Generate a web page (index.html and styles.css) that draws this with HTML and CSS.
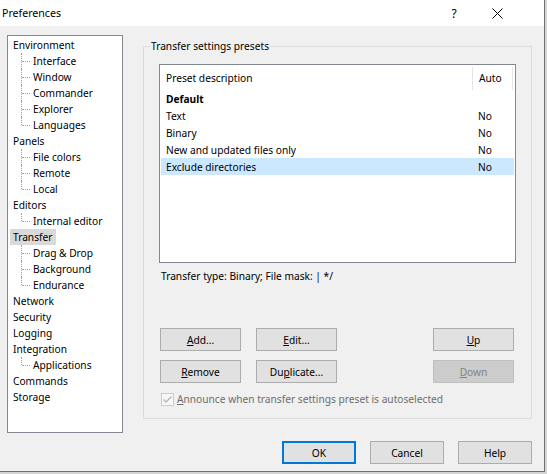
FILE: index.html
```html
<!DOCTYPE html>
<html lang="en">
<head>
    <meta charset="UTF-8">
    <title>Preferences</title>
    <link rel="stylesheet" href="styles.css">
</head>
<body>

    <div class="window">
        <!-- Title bar -->
        <div class="titlebar">
            <span class="title">Preferences</span>
            <span class="help-btn">?</span>
            <span class="close-btn">
                <svg width="11" height="11" viewBox="0 0 11 11"><path d="M0.5 0.5 L10.5 10.5 M10.5 0.5 L0.5 10.5" stroke="#000" stroke-width="1" fill="none"/></svg>
            </span>
        </div>

        <div class="client">
            <div class="main">
                <!-- Navigation tree -->
                <ul class="tree">
                    <li><span class="label">Environment</span></li>
                    <li class="child"><span class="label">Interface</span></li>
                    <li class="child"><span class="label">Window</span></li>
                    <li class="child"><span class="label">Commander</span></li>
                    <li class="child"><span class="label">Explorer</span></li>
                    <li class="child last"><span class="label">Languages</span></li>
                    <li><span class="label">Panels</span></li>
                    <li class="child"><span class="label">File colors</span></li>
                    <li class="child"><span class="label">Remote</span></li>
                    <li class="child last"><span class="label">Local</span></li>
                    <li><span class="label">Editors</span></li>
                    <li class="child last"><span class="label">Internal editor</span></li>
                    <li class="selected"><span class="label">Transfer</span></li>
                    <li class="child"><span class="label">Drag &amp; Drop</span></li>
                    <li class="child"><span class="label">Background</span></li>
                    <li class="child last"><span class="label">Endurance</span></li>
                    <li><span class="label">Network</span></li>
                    <li><span class="label">Security</span></li>
                    <li><span class="label">Logging</span></li>
                    <li><span class="label">Integration</span></li>
                    <li class="child last"><span class="label">Applications</span></li>
                    <li><span class="label">Commands</span></li>
                    <li><span class="label">Storage</span></li>
                </ul>

                <!-- Transfer page -->
                <fieldset class="group">
                    <legend>Transfer settings presets</legend>

                    <div class="listview">
                        <div class="lv-header">
                            <span class="col-desc">Preset description</span>
                            <span class="col-auto">Auto</span>
                        </div>
                        <div class="lv-row bold"><span class="col-desc">Default</span><span class="col-auto"></span></div>
                        <div class="lv-row"><span class="col-desc">Text</span><span class="col-auto">No</span></div>
                        <div class="lv-row"><span class="col-desc">Binary</span><span class="col-auto">No</span></div>
                        <div class="lv-row"><span class="col-desc">New and updated files only</span><span class="col-auto">No</span></div>
                        <div class="lv-row selected"><span class="col-desc">Exclude directories</span><span class="col-auto">No</span></div>
                    </div>

                    <div class="info">Transfer type: Binary; File mask: | */</div>

                    <div class="preset-buttons">
                        <button><u>A</u>dd...</button>
                        <button><u>E</u>dit...</button>
                        <button class="col-right"><u>U</u>p</button>
                        <button><u>R</u>emove</button>
                        <button>Du<u>p</u>licate...</button>
                        <button class="col-right" disabled><u>D</u>own</button>
                    </div>

                    <div class="check disabled">
                        <span class="checkbox">
                            <svg width="11" height="11" viewBox="0 0 11 11"><path d="M1.5 5.5 L4 8 L9.5 2.5" stroke="#b5b5b5" stroke-width="1.3" fill="none"/></svg>
                        </span>
                        <span><u>A</u>nnounce when transfer settings preset is autoselected</span>
                    </div>
                </fieldset>
            </div>

            <!-- Dialog buttons -->
            <div class="footer">
                <button class="default">OK</button>
                <button>Cancel</button>
                <button>Help</button>
            </div>
        </div>
    </div>

</body>
</html>
```

FILE: styles.css
```css
body {
    margin: 0;
    padding: 0;
    background-color: #d4d4d4;
    font-family: "Noto Sans", "Segoe UI", sans-serif;
    font-size: 10.2px;
    color: #000;
}
.window {
    width: 544px;
    height: 471px;
    border-right: 1px solid #707070;
    border-bottom: 1px solid #707070;
    background-color: #f0f0f0;
    display: flex;
    flex-direction: column;
}
.titlebar {
    flex: none;
    height: 26px;
    background-color: #fff;
    display: flex;
    align-items: center;
}
.title {
    padding-left: 2px;
    font-size: 10.6px;
}
.help-btn {
    margin-left: auto;
    width: 40px;
    text-align: center;
    font-size: 12px;
}
.close-btn {
    width: 46px;
    margin-right: 24px;
    display: flex;
    justify-content: center;
    padding-top: 1px;
}

.client {
    flex: 1;
    display: flex;
    flex-direction: column;
    padding: 9px 12px 0 7px;
}
.main {
    display: flex;
    gap: 20px;
    height: 398px;
}

/* tree */
.tree {
    width: 116px;
    height: 398px;
    box-sizing: border-box;
    margin: 0;
    padding: 1px 2px;
    list-style: none;
    background-color: #fff;
    border: 1px solid #828790;
}
.tree li {
    position: relative;
    height: 16px;
    line-height: 16px;
    white-space: nowrap;
}
.tree .label {
    display: inline-block;
    padding: 0 3px;
}
.tree .selected .label {
    background-color: #d9d9d9;
}
.tree .child {
    padding-left: 20px;
}
.tree .child::before {
    content: "";
    position: absolute;
    left: 11px;
    top: 0;
    bottom: 0;
    border-left: 1px dotted #a0a0a0;
}
.tree .child.last::before {
    bottom: 8px;
}
.tree .child::after {
    content: "";
    position: absolute;
    left: 12px;
    top: 8px;
    width: 8px;
    border-top: 1px dotted #a0a0a0;
}

/* group box */
.group {
    width: 389px;
    box-sizing: border-box;
    margin: 4px 0 0 0;
    padding: 11px 15px 12px 15px;
    border: 1px solid #dcdcdc;
    min-width: 0;
    align-self: flex-start;
}
.group legend {
    padding: 0 1px;
    margin-left: -9px;
    line-height: 14px;
}

.listview {
    height: 199px;
    box-sizing: border-box;
    border: 1px solid #828790;
    background-color: #fff;
}
.lv-header {
    display: flex;
    height: 25px;
}
.lv-header span {
    box-sizing: border-box;
    margin-top: 2px;
    height: 23px;
    line-height: 23px;
    padding-left: 6px;
    border-right: 1px solid #e5e5e5;
}
.lv-header .col-desc {
    width: 313px;
}
.lv-header .col-auto {
    width: 40px;
}
.lv-row {
    display: flex;
    box-sizing: border-box;
    height: 17px;
    padding-top: 1px;
    line-height: 16px;
    margin: 0 1px;
}
.lv-row .col-desc {
    width: 311px;
    padding-left: 5px;
    box-sizing: border-box;
}
.lv-row .col-auto {
    padding-left: 6px;
}
.lv-row.bold {
    font-weight: bold;
}
.lv-row.selected {
    background-color: #cce8ff;
}

.info {
    margin-top: 6px;
    margin-left: 2px;
    line-height: 14px;
}

.preset-buttons {
    display: grid;
    grid-template-columns: 81px 81px 1fr 81px;
    column-gap: 15px;
    row-gap: 9px;
    margin-top: 45px;
    padding: 0 2px 0 1px;
}
.preset-buttons .col-right {
    grid-column: 4;
}

button {
    height: 23px;
    padding: 1px 0 0 0;
    font-family: inherit;
    font-size: inherit;
    color: #000;
    background-color: #e1e1e1;
    border: 1px solid #adadad;
    border-radius: 0;
}
button:disabled {
    background-color: #cccccc;
    border-color: #bfbfbf;
    color: #838383;
}
button.default {
    border: 2px solid #0078d7;
}

.check {
    display: flex;
    align-items: center;
    height: 14px;
    margin-top: 9px;
    padding-left: 2px;
}
.check.disabled {
    color: #6d6d6d;
}
.checkbox {
    width: 13px;
    height: 13px;
    box-sizing: border-box;
    border: 1px solid #cccccc;
    background-color: #f7f7f7;
    margin-right: 3px;
    display: flex;
    align-items: center;
    justify-content: center;
}

.footer {
    display: flex;
    justify-content: flex-end;
    gap: 14px;
    margin-top: 8px;
}
.footer button {
    width: 74px;
}
```
